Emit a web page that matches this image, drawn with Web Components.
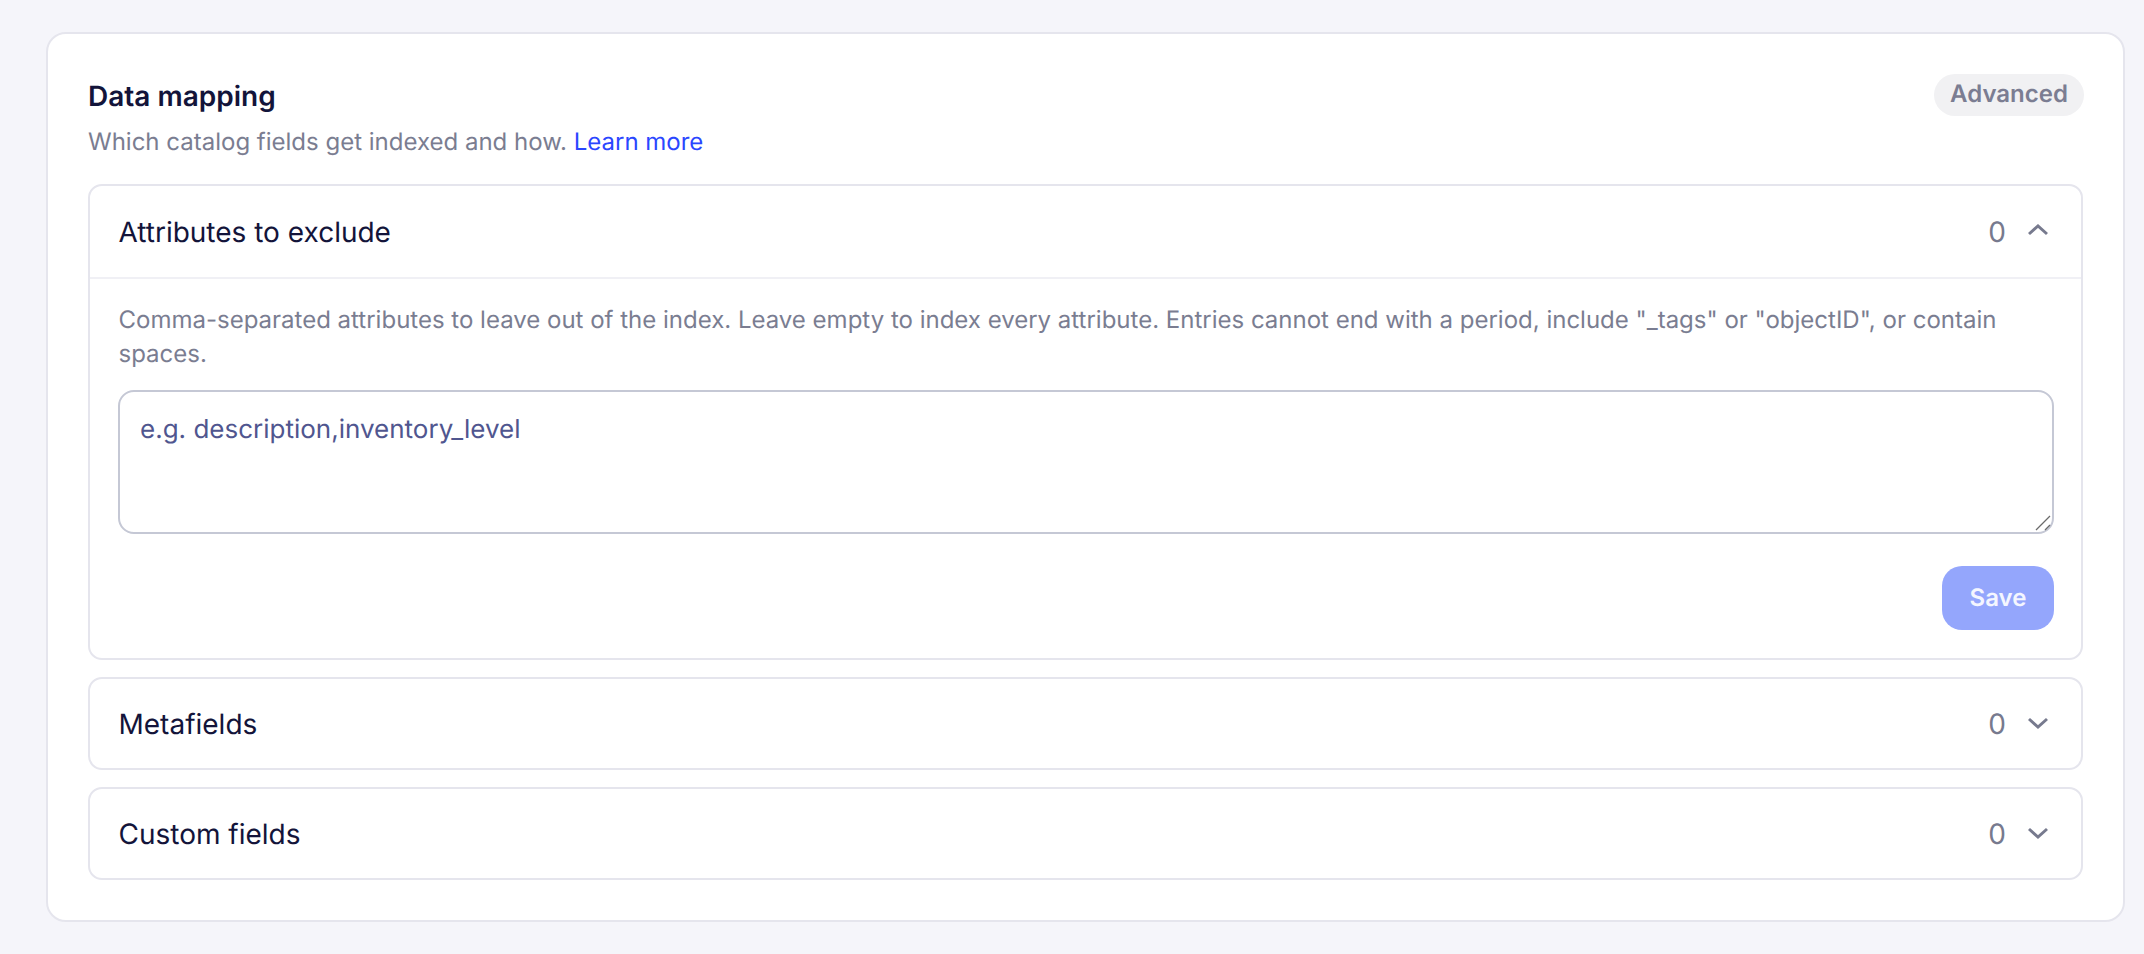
<!DOCTYPE html>
<html lang="en"><head><meta charset="utf-8"><title>Data mapping</title>
<style>
html,body{margin:0;height:100%;background:#f5f5fa}
body{font-family:Inter,"Liberation Sans",sans-serif;color:#13143a;padding:32px 19px 0 46px;box-sizing:border-box;overflow:hidden;text-rendering:geometricPrecision}
</style></head><body>
<template id="t-card"><style>
:host{display:block;box-sizing:border-box;height:890px;background:#fff;border:2px solid #e5e5ed;border-radius:20px;padding:40px}
header{display:flex;justify-content:space-between;align-items:flex-start;height:110px}
h2{margin:0;font:600 28px/34px Inter,sans-serif;color:#13143a;padding-top:5px}
p{margin:12px 0 0;font:400 24px/34px Inter,sans-serif;color:#7a7d91}
.list{display:flex;flex-direction:column;gap:17px}
</style><header><div><h2><slot name="title"></slot></h2><p><slot name="sub"></slot></p></div><slot name="badge"></slot></header><div class="list"><slot></slot></div></template>

<template id="t-badge"><style>
:host{display:inline-flex;align-items:center;justify-content:center;box-sizing:border-box;width:150px;height:42px;margin-right:-1px;padding-bottom:2px;border-radius:21px;background:#f1f1f3;color:#7b7d92;font:600 24px/40px Inter,sans-serif}
</style><slot></slot></template>

<template id="t-link"><style>
:host{display:inline;color:#2a46ff}
</style><slot></slot></template>

<template id="t-acc"><style>
:host{display:block;box-sizing:border-box;border:2px solid #e5e5ed;border-radius:14px;background:#fff}
.h{display:flex;align-items:center;height:88px;padding:1px 33px 0 28.5px;font:400 28px/34px Inter,sans-serif;color:#13143a}
.t{flex:1}
.c{color:#777a8e;margin-right:22px}
svg{display:block;width:20px;height:12px;margin-top:-3px}
:host([open]) .h{height:90px;border-bottom:2px solid #f0f0f5}
:host([open]) svg{margin-top:-5px}
.b{display:none}
:host([open]) .b{display:block;padding:0 27px 28px 28px}
</style><div class="h"><span class="t"><slot name="title"></slot></span><span class="c"><slot name="count"></slot></span><svg viewBox="0 0 20 12" fill="none" stroke="#777a8e" stroke-width="3"><path id="chev" d="M1 2l9 8 9-8"/></svg></div><div class="b"><slot></slot></div></template>

<template id="t-field"><style>
:host{display:block}
p{margin:0;padding:24px 0 0 .5px;font:400 24px/34px Inter,sans-serif;color:#7a7d91}
.ta{position:relative;box-sizing:border-box;height:144px;margin-top:19px;border:2px solid #c5c8d5;border-radius:16px;padding:21px 20px 19px;font:400 26px/34px Inter,sans-serif;color:#50568f;background:#fff}
.ta svg{position:absolute;right:1px;bottom:1px;width:16px;height:16px}
.f{display:flex;justify-content:flex-end;margin-top:32px}
</style><p><slot name="help"></slot></p><div class="ta"><slot name="placeholder"></slot><svg viewBox="0 0 16 16" fill="none" stroke="#6a6a6a" stroke-width="1.3"><path d="M1 15L15 1M10 15l5-5"/></svg></div><div class="f"><slot name="action"></slot></div></template>

<template id="t-btn"><style>
:host{display:inline-flex;align-items:center;justify-content:center;width:112px;height:64px;border-radius:20px;background:#94a6fc;color:#f4f6ff;font:600 24px/34px Inter,sans-serif}
</style><slot></slot></template>

<data-card>
  <span slot="title">Data mapping</span>
  <span slot="sub">Which catalog fields get indexed and how. <x-link>Learn more</x-link></span>
  <x-badge slot="badge">Advanced</x-badge>
  <x-acc open>
    <span slot="title">Attributes to exclude</span><span slot="count">0</span>
    <x-field>
      <span slot="help">Comma-separated attributes to leave out of the index. Leave empty to index every attribute. Entries cannot end with a period, include "_tags" or "objectID", or contain spaces.</span>
      <span slot="placeholder">e.g. description,inventory_level</span>
      <x-btn slot="action">Save</x-btn>
    </x-field>
  </x-acc>
  <x-acc><span slot="title">Metafields</span><span slot="count">0</span></x-acc>
  <x-acc><span slot="title">Custom fields</span><span slot="count">0</span></x-acc>
</data-card>
<script>
function def(tag,id,after){customElements.define(tag,class extends HTMLElement{constructor(){super();const r=this.attachShadow({mode:'open'});r.appendChild(document.getElementById(id).content.cloneNode(true));if(after)after(this,r)}})}
def('data-card','t-card');def('x-badge','t-badge');def('x-link','t-link');def('x-field','t-field');def('x-btn','t-btn');
def('x-acc','t-acc',(el,r)=>{if(el.hasAttribute('open'))r.getElementById('chev').setAttribute('d','M1 10l9-8 9 8')});
</script>
</body></html>
